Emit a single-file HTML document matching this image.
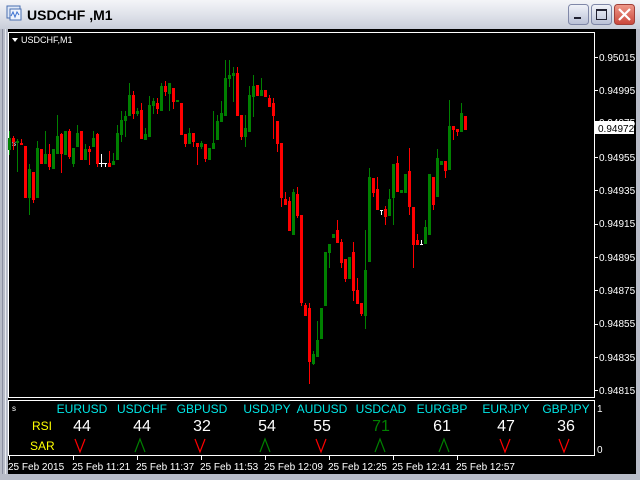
<!DOCTYPE html>
<html><head><meta charset="utf-8"><style>
body{margin:0;width:640px;height:480px;overflow:hidden;background:#c5c9d2;font-family:"Liberation Sans",sans-serif}
</style></head><body>
<svg width="640" height="480" viewBox="0 0 640 480" xmlns="http://www.w3.org/2000/svg" style="position:absolute;left:0;top:0" font-family="Liberation Sans, sans-serif">
<defs>
<linearGradient id="tb" x1="0" y1="0" x2="0" y2="1"><stop offset="0" stop-color="#f4f5f8"/><stop offset="0.5" stop-color="#dfe2ea"/><stop offset="1" stop-color="#c7ccd8"/></linearGradient>
<linearGradient id="bt" x1="0" y1="0" x2="0" y2="1"><stop offset="0" stop-color="#f2f4fa"/><stop offset="1" stop-color="#b9c0d6"/></linearGradient>
<linearGradient id="cl" x1="0" y1="0" x2="0" y2="1"><stop offset="0" stop-color="#f09a8a"/><stop offset="1" stop-color="#c9463a"/></linearGradient>
</defs>
<rect x="0" y="0" width="640" height="30" fill="url(#tb)"/>
<rect x="0" y="29" width="8" height="451" fill="#b8bcc8"/>
<rect x="2" y="29" width="1" height="451" fill="#8a8ea0"/>
<rect x="5" y="29" width="1" height="451" fill="#e8eaf0"/>
<rect x="0" y="474" width="640" height="6" fill="#b8bcc8"/>
<rect x="636" y="29" width="4" height="451" fill="#b8bcc8"/>
<!-- title icon -->
<rect x="7" y="6" width="13" height="12" fill="#dfe8f8" stroke="#4a6fb0"/>
<rect x="10" y="9" width="11" height="11" fill="#eef3fc" stroke="#4a6fb0"/>
<polyline points="11,16 13,12 15,17 17,12 19,15" fill="none" stroke="#3a70d0"/>
<text x="27" y="20" font-size="14" font-weight="bold" fill="#000">USDCHF ,M1</text>
<!-- buttons -->
<rect x="568.5" y="4.5" width="20" height="20" rx="3" fill="url(#bt)" stroke="#8088a8"/>
<rect x="574" y="17" width="7" height="2" fill="#202030"/>
<rect x="591.5" y="4.5" width="20" height="20" rx="3" fill="url(#bt)" stroke="#8088a8"/>
<rect x="596.5" y="9.5" width="10" height="10" fill="none" stroke="#202030"/><rect x="596" y="9" width="11" height="2" fill="#202030"/>
<rect x="614.5" y="4.5" width="20" height="20" rx="3" fill="url(#cl)" stroke="#a04038"/>
<path d="M619 9 L630 20 M630 9 L619 20" stroke="#fff" stroke-width="2.2"/>
<!-- black area -->
<rect x="8" y="29" width="628" height="445" fill="#000"/>
<rect x="8.5" y="32.5" width="586" height="365" fill="none" stroke="#fff"/>
<rect x="8.5" y="400.5" width="586" height="55" fill="none" stroke="#fff"/>
<polygon points="12,38 18,38 15,42" fill="#fff"/>
<text x="21" y="43" font-size="9" fill="#fff">USDCHF,M1</text>
<text x="12" y="146" font-size="8" fill="#fff">s</text>
<text x="12" y="411" font-size="8" fill="#fff">s</text>
<!-- price axis -->
<g fill="#fff" font-size="10">
<text x="599" y="61">0.95015</text><rect x="595" y="57" width="3" height="1"/>
<text x="599" y="94">0.94995</text><rect x="595" y="90" width="3" height="1"/>
<text x="599" y="161">0.94955</text><rect x="595" y="157" width="3" height="1"/>
<text x="599" y="194">0.94935</text><rect x="595" y="190" width="3" height="1"/>
<text x="599" y="227">0.94915</text><rect x="595" y="224" width="3" height="1"/>
<text x="599" y="261">0.94895</text><rect x="595" y="257" width="3" height="1"/>
<text x="599" y="294">0.94875</text><rect x="595" y="290" width="3" height="1"/>
<text x="599" y="327">0.94855</text><rect x="595" y="324" width="3" height="1"/>
<text x="599" y="361">0.94835</text><rect x="595" y="357" width="3" height="1"/>
<text x="599" y="394">0.94815</text><rect x="595" y="390" width="3" height="1"/>
<text x="599" y="126">0.94975</text>
<rect x="595" y="121" width="39" height="13"/>
<text x="598" y="132" fill="#000">0.94972</text>
<text x="597" y="412">1</text>
<text x="597" y="453">0</text>
</g>
<!-- candles -->
<g id="c"></g>
<g fill="#ff0000">
<rect x="13" y="136" width="1" height="14"/><rect x="12" y="138" width="3" height="4"/>
<rect x="21" y="139" width="1" height="6"/><rect x="20" y="143" width="3" height="2"/>
<rect x="24" y="146" width="3" height="52"/>
<rect x="33" y="172" width="1" height="31"/><rect x="32" y="172" width="3" height="28"/>
<rect x="40" y="149" width="3" height="15"/>
<rect x="49" y="144" width="1" height="26"/><rect x="48" y="154" width="3" height="13"/>
<rect x="61" y="133" width="1" height="40"/><rect x="60" y="134" width="3" height="20"/>
<rect x="69" y="129" width="1" height="30"/><rect x="68" y="131" width="3" height="26"/>
<rect x="80" y="131" width="3" height="29"/>
<rect x="89" y="146" width="1" height="19"/><rect x="88" y="149" width="3" height="3"/>
<rect x="97" y="133" width="1" height="34"/><rect x="96" y="134" width="3" height="30"/>
<rect x="109" y="151" width="1" height="16"/><rect x="108" y="163" width="3" height="4"/>
<rect x="133" y="91" width="1" height="28"/><rect x="132" y="95" width="3" height="19"/>
<rect x="141" y="103" width="1" height="36"/><rect x="140" y="110" width="3" height="29"/>
<rect x="157" y="98" width="1" height="16"/><rect x="156" y="103" width="3" height="6"/>
<rect x="165" y="81" width="1" height="15"/><rect x="164" y="86" width="3" height="6"/>
<rect x="173" y="88" width="1" height="21"/><rect x="172" y="88" width="3" height="14"/>
<rect x="180" y="103" width="3" height="32"/>
<rect x="185" y="134" width="1" height="13"/><rect x="184" y="134" width="3" height="10"/>
<rect x="193" y="133" width="1" height="14"/><rect x="192" y="133" width="3" height="9"/>
<rect x="197" y="143" width="1" height="22"/><rect x="196" y="143" width="3" height="4"/>
<rect x="205" y="144" width="1" height="18"/><rect x="204" y="144" width="3" height="15"/>
<rect x="237" y="67" width="1" height="49"/><rect x="236" y="73" width="3" height="43"/>
<rect x="241" y="115" width="1" height="25"/><rect x="240" y="115" width="3" height="22"/>
<rect x="256" y="85" width="3" height="11"/>
<rect x="264" y="90" width="3" height="7"/>
<rect x="269" y="95" width="1" height="12"/><rect x="268" y="98" width="3" height="9"/>
<rect x="273" y="98" width="1" height="41"/><rect x="272" y="103" width="3" height="13"/>
<rect x="277" y="121" width="1" height="31"/><rect x="276" y="121" width="3" height="23"/>
<rect x="281" y="143" width="1" height="64"/><rect x="280" y="143" width="3" height="55"/>
<rect x="285" y="192" width="1" height="13"/><rect x="284" y="199" width="3" height="6"/>
<rect x="289" y="197" width="1" height="34"/><rect x="288" y="201" width="3" height="30"/>
<rect x="297" y="187" width="1" height="31"/><rect x="296" y="194" width="3" height="22"/>
<rect x="301" y="215" width="1" height="91"/><rect x="300" y="215" width="3" height="88"/>
<rect x="305" y="303" width="1" height="13"/><rect x="304" y="305" width="3" height="11"/>
<rect x="309" y="303" width="1" height="81"/><rect x="308" y="308" width="3" height="54"/>
<rect x="337" y="220" width="1" height="23"/><rect x="336" y="230" width="3" height="13"/>
<rect x="341" y="239" width="1" height="29"/><rect x="340" y="242" width="3" height="21"/>
<rect x="345" y="259" width="1" height="23"/><rect x="344" y="259" width="3" height="20"/>
<rect x="353" y="242" width="1" height="59"/><rect x="352" y="252" width="3" height="39"/>
<rect x="357" y="278" width="1" height="26"/><rect x="356" y="290" width="3" height="14"/>
<rect x="361" y="303" width="1" height="13"/><rect x="360" y="303" width="3" height="11"/>
<rect x="373" y="178" width="1" height="19"/><rect x="372" y="178" width="3" height="15"/>
<rect x="377" y="177" width="1" height="33"/><rect x="376" y="189" width="3" height="21"/>
<rect x="385" y="206" width="1" height="19"/><rect x="384" y="209" width="3" height="8"/>
<rect x="397" y="156" width="1" height="36"/><rect x="396" y="163" width="3" height="29"/>
<rect x="409" y="148" width="1" height="67"/><rect x="408" y="171" width="3" height="36"/>
<rect x="413" y="207" width="1" height="61"/><rect x="412" y="207" width="3" height="38"/>
<rect x="417" y="234" width="1" height="11"/><rect x="416" y="240" width="3" height="5"/>
<rect x="433" y="177" width="1" height="33"/><rect x="432" y="177" width="3" height="28"/>
<rect x="445" y="161" width="1" height="17"/><rect x="444" y="161" width="3" height="10"/>
<rect x="453" y="126" width="1" height="14"/><rect x="452" y="126" width="3" height="4"/>
<rect x="457" y="129" width="1" height="7"/><rect x="456" y="129" width="3" height="3"/>
<rect x="464" y="116" width="3" height="14"/>
</g>
<g fill="#008000">
<rect x="9" y="131" width="1" height="24"/><rect x="8" y="138" width="3" height="12"/>
<rect x="17" y="139" width="1" height="33"/><rect x="16" y="141" width="3" height="2"/>
<rect x="29" y="164" width="1" height="51"/><rect x="28" y="169" width="3" height="29"/>
<rect x="37" y="141" width="1" height="57"/><rect x="36" y="148" width="3" height="50"/>
<rect x="45" y="131" width="1" height="33"/><rect x="44" y="154" width="3" height="10"/>
<rect x="52" y="149" width="3" height="20"/>
<rect x="57" y="115" width="1" height="39"/><rect x="56" y="136" width="3" height="18"/>
<rect x="64" y="131" width="3" height="24"/>
<rect x="73" y="148" width="1" height="19"/><rect x="72" y="148" width="3" height="16"/>
<rect x="77" y="125" width="1" height="22"/><rect x="76" y="133" width="3" height="14"/>
<rect x="85" y="144" width="1" height="16"/><rect x="84" y="149" width="3" height="11"/>
<rect x="93" y="131" width="1" height="16"/><rect x="92" y="138" width="3" height="9"/>
<rect x="113" y="153" width="1" height="12"/><rect x="112" y="161" width="3" height="4"/>
<rect x="117" y="125" width="1" height="35"/><rect x="116" y="133" width="3" height="27"/>
<rect x="121" y="111" width="1" height="31"/><rect x="120" y="120" width="3" height="15"/>
<rect x="125" y="111" width="1" height="26"/><rect x="124" y="116" width="3" height="5"/>
<rect x="129" y="83" width="1" height="33"/><rect x="128" y="95" width="3" height="21"/>
<rect x="137" y="108" width="1" height="8"/><rect x="136" y="111" width="3" height="3"/>
<rect x="145" y="128" width="1" height="12"/><rect x="144" y="134" width="3" height="6"/>
<rect x="149" y="96" width="1" height="41"/><rect x="148" y="105" width="3" height="32"/>
<rect x="153" y="98" width="1" height="16"/><rect x="152" y="101" width="3" height="5"/>
<rect x="161" y="83" width="1" height="28"/><rect x="160" y="86" width="3" height="25"/>
<rect x="169" y="83" width="1" height="28"/><rect x="168" y="83" width="3" height="11"/>
<rect x="176" y="100" width="3" height="2"/>
<rect x="189" y="128" width="1" height="16"/><rect x="188" y="133" width="3" height="11"/>
<rect x="201" y="141" width="1" height="8"/><rect x="200" y="143" width="3" height="4"/>
<rect x="208" y="148" width="3" height="12"/>
<rect x="213" y="111" width="1" height="38"/><rect x="212" y="143" width="3" height="6"/>
<rect x="217" y="115" width="1" height="25"/><rect x="216" y="121" width="3" height="19"/>
<rect x="221" y="101" width="1" height="21"/><rect x="220" y="113" width="3" height="9"/>
<rect x="225" y="60" width="1" height="56"/><rect x="224" y="78" width="3" height="38"/>
<rect x="229" y="60" width="1" height="27"/><rect x="228" y="75" width="3" height="4"/>
<rect x="233" y="67" width="1" height="35"/><rect x="232" y="73" width="3" height="3"/>
<rect x="245" y="115" width="1" height="32"/><rect x="244" y="128" width="3" height="9"/>
<rect x="249" y="86" width="1" height="46"/><rect x="248" y="95" width="3" height="37"/>
<rect x="253" y="75" width="1" height="42"/><rect x="252" y="86" width="3" height="11"/>
<rect x="261" y="78" width="1" height="18"/><rect x="260" y="90" width="3" height="6"/>
<rect x="293" y="189" width="1" height="46"/><rect x="292" y="192" width="3" height="43"/>
<rect x="313" y="351" width="1" height="14"/><rect x="312" y="354" width="3" height="10"/>
<rect x="317" y="321" width="1" height="36"/><rect x="316" y="340" width="3" height="17"/>
<rect x="320" y="308" width="3" height="31"/>
<rect x="324" y="252" width="3" height="54"/>
<rect x="329" y="244" width="1" height="24"/><rect x="328" y="244" width="3" height="9"/>
<rect x="332" y="234" width="3" height="4"/>
<rect x="348" y="257" width="3" height="22"/>
<rect x="365" y="230" width="1" height="99"/><rect x="364" y="270" width="3" height="46"/>
<rect x="369" y="168" width="1" height="94"/><rect x="368" y="177" width="3" height="85"/>
<rect x="389" y="189" width="1" height="27"/><rect x="388" y="199" width="3" height="17"/>
<rect x="393" y="164" width="1" height="61"/><rect x="392" y="164" width="3" height="34"/>
<rect x="400" y="190" width="3" height="3"/>
<rect x="404" y="174" width="3" height="19"/>
<rect x="425" y="220" width="1" height="24"/><rect x="424" y="227" width="3" height="17"/>
<rect x="428" y="174" width="3" height="61"/>
<rect x="437" y="149" width="1" height="48"/><rect x="436" y="158" width="3" height="39"/>
<rect x="440" y="161" width="3" height="4"/>
<rect x="449" y="100" width="1" height="70"/><rect x="448" y="126" width="3" height="44"/>
<rect x="461" y="103" width="1" height="29"/><rect x="460" y="113" width="3" height="19"/>
</g>
<g fill="#fff">
<rect x="101" y="154" width="1" height="13"/><rect x="99" y="163" width="5" height="1"/>
<rect x="104" y="163" width="3" height="1"/><rect x="105" y="163" width="1" height="4"/>
<rect x="380" y="210" width="3" height="1"/><rect x="381" y="210" width="1" height="5"/>
<rect x="420" y="244" width="3" height="1"/><rect x="421" y="240" width="1" height="4"/>
</g>
<!-- indicator -->
<g font-size="12" fill="#00e6e6" text-anchor="middle">
<text x="82" y="413">EURUSD</text><text x="142" y="413">USDCHF</text><text x="202" y="413">GBPUSD</text>
<text x="267" y="413">USDJPY</text><text x="322" y="413">AUDUSD</text><text x="381" y="413">USDCAD</text>
<text x="442" y="413">EURGBP</text><text x="506" y="413">EURJPY</text><text x="566" y="413">GBPJPY</text>
</g>
<g font-size="16" fill="#fff" text-anchor="middle">
<text x="82" y="431">44</text><text x="142" y="431">44</text><text x="202" y="431">32</text>
<text x="267" y="431">54</text><text x="322" y="431">55</text><text x="381" y="431" fill="#008000">71</text>
<text x="442" y="431">61</text><text x="506" y="431">47</text><text x="566" y="431">36</text>
</g>
<text x="32" y="430" font-size="12" fill="#ffff00">RSI</text>
<text x="30" y="450" font-size="12" fill="#ffff00">SAR</text>
<g fill="none" stroke-width="1.2">
<polyline points="75,439 80,452 85,439" stroke="#ff0000"/>
<polyline points="135,452 140,439 145,452" stroke="#008000"/>
<polyline points="195,439 200,452 205,439" stroke="#ff0000"/>
<polyline points="260,452 265,439 270,452" stroke="#008000"/>
<polyline points="316,439 321,452 326,439" stroke="#ff0000"/>
<polyline points="375,452 380,439 385,452" stroke="#008000"/>
<polyline points="439,452 444,439 449,452" stroke="#008000"/>
<polyline points="500,439 505,452 510,439" stroke="#ff0000"/>
<polyline points="559,439 564,452 569,439" stroke="#ff0000"/>
</g>
<!-- time axis -->
<g fill="#fff" font-size="10">
<rect x="9" y="456" width="1" height="4"/><text x="8" y="470">25 Feb 2015</text>
<rect x="73" y="456" width="1" height="4"/><text x="72" y="470">25 Feb 11:21</text>
<rect x="137" y="456" width="1" height="4"/><text x="136" y="470">25 Feb 11:37</text>
<rect x="201" y="456" width="1" height="4"/><text x="200" y="470">25 Feb 11:53</text>
<rect x="265" y="456" width="1" height="4"/><text x="264" y="470">25 Feb 12:09</text>
<rect x="329" y="456" width="1" height="4"/><text x="328" y="470">25 Feb 12:25</text>
<rect x="393" y="456" width="1" height="4"/><text x="392" y="470">25 Feb 12:41</text>
<rect x="457" y="456" width="1" height="4"/><text x="456" y="470">25 Feb 12:57</text>
</g>
</svg>
</body></html>
